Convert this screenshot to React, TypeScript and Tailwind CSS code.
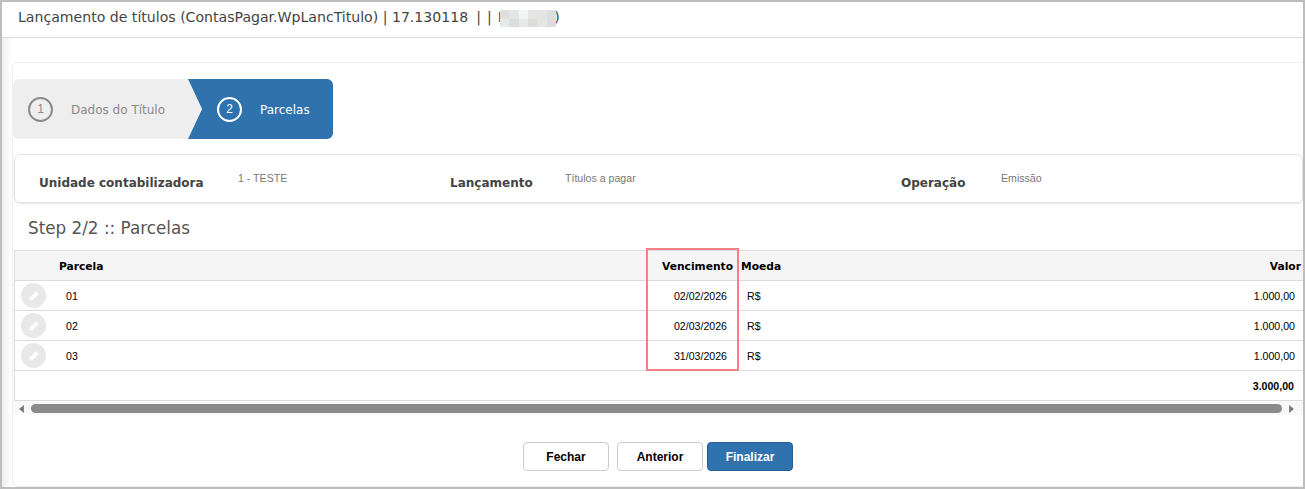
const rows = [
  { parcela: "01", vencimento: "02/02/2026" },
  { parcela: "02", vencimento: "02/03/2026" },
  { parcela: "03", vencimento: "31/03/2026" },
];

const blur = [
  "bg-[#dedede]", "bg-[#e3e5e6]", "bg-[#f3f5f4]", "bg-[#e6e5e4]", "bg-[#e3e5e5]", "bg-[#dcdfdf]",
  "bg-[#e4e9ec]", "bg-[#dcdedd]", "bg-[#e7e9e8]", "bg-[#dedcd9]", "bg-[#e3e5e7]", "bg-[#dcdcdc]",
];

const gridCols = "grid grid-cols-[37px_594px_92px_1fr_80px]";

function EditIcon() {
  return (
    <span className="flex h-[25px] w-[25px] items-center justify-center rounded-full bg-[#e8e8e8]">
      <svg viewBox="0 0 12 12" className="h-[12px] w-[12px]" fill="#ffffff">
        <path d="M8 1.4 10.6 4 4.4 10.2 1.4 10.6 1.8 7.6Z" />
      </svg>
    </span>
  );
}

function Row({ parcela, vencimento }: { parcela: string; vencimento: string }) {
  return (
    <div className={`${gridCols} h-[30px] items-center border-b border-[#dddddd] text-[10.6px] text-black`}>
      <div className="pl-[6px]">
        <EditIcon />
      </div>
      <div className="pl-[14px] pt-[2px]">{parcela}</div>
      <div className="pr-[11px] pt-[2px] text-right">{vencimento}</div>
      <div className="pl-[9px] pt-[2px]">R$</div>
      <div className="pr-[8px] pt-[2px] text-right">1.000,00</div>
    </div>
  );
}

function InfoItem({ label, value, labelWidth, width }: { label: string; value: string; labelWidth: string; width: string }) {
  return (
    <div className={`flex ${width}`}>
      <div className={`${labelWidth} pt-[19px] font-['DejaVu_Sans'] text-[12px] font-bold text-[#444444]`}>{label}</div>
      <div className="pt-[16px] text-[10.6px] text-[#777777]">{value}</div>
    </div>
  );
}

export default function App() {
  return (
    <div className="relative flex h-[489px] w-[1305px] flex-col overflow-hidden border-x-2 border-y-2 border-[#bdbdbd] bg-white font-['Liberation_Sans',sans-serif]">
      <header className="relative flex h-[36px] shrink-0 items-center whitespace-pre border-b border-[#d9d9d9] bg-white pb-[3px] pl-[16px] font-['DejaVu_Sans',sans-serif] text-[14.1px] text-[#444444]">
        <span>Lançamento de títulos (ContasPagar.WpLancTitulo) | 17.130118</span>
        <span className="ml-[8px]">|</span>
        <span className="ml-[6px]">|</span>
        <span className="ml-[6px]">P</span>
        <span className="ml-[48px]">)</span>
        <div className="absolute left-[498px] top-[8px] grid h-[17px] w-[56px] grid-cols-6 grid-rows-2">
          {blur.map((c, i) => (
            <div key={i} className={c} />
          ))}
        </div>
      </header>

      <div className="flex flex-1 flex-col bg-[linear-gradient(90deg,#eeeeee,#ffffff_10px)] pl-[10px] pt-[24px]">
        <main className="flex-1 rounded-l-md border-y border-l border-[#eeeeee] bg-white pt-[16px]">
          <div className="flex h-[60px] w-[320px] overflow-hidden rounded-md">
            <div className="flex w-[189px] shrink-0 items-center bg-[#eeeeee] pl-[15px] [clip-path:polygon(0_0,175px_0,188px_50%,175px_100%,0_100%)]">
              <span className="flex h-[25px] w-[25px] items-center justify-center rounded-full border-2 border-[#8a8a8a] text-[12px] text-[#8a8a8a]">1</span>
              <span className="ml-[18px] pt-[2px] font-['DejaVu_Sans',sans-serif] text-[12px] text-[#8a8a8a]">Dados do Título</span>
            </div>
            <div className="ml-[-14px] flex w-[145px] shrink-0 items-center bg-[#2f72ae] pl-[29px] [clip-path:polygon(0_0,100%_0,100%_100%,0_100%,14px_50%)]">
              <span className="flex h-[25px] w-[25px] items-center justify-center rounded-full border-2 border-white text-[12px] text-white">2</span>
              <span className="ml-[18px] pt-[2px] font-['DejaVu_Sans',sans-serif] text-[12px] text-white">Parcelas</span>
            </div>
          </div>

          <section className="ml-[1px] mt-[15px] flex h-[49px] rounded-md border border-[#e4e4e4] pl-[24px] shadow-[0_1px_2px_rgba(0,0,0,0.12)]">
            <InfoItem label="Unidade contabilizadora" value="1 - TESTE" labelWidth="w-[199px]" width="w-[411px]" />
            <InfoItem label="Lançamento" value="Títulos a pagar" labelWidth="w-[115px]" width="w-[451px]" />
            <InfoItem label="Operação" value="Emissão" labelWidth="w-[100px]" width="w-[300px]" />
          </section>

          <h2 className="mt-[14px] pl-[15px] font-['DejaVu_Sans',sans-serif] text-[16.8px] font-normal leading-[22px] text-[#555555]">Step 2/2 :: Parcelas</h2>

          <div className="ml-[1px] mt-[11px] border-l border-[#dddddd]">
            <div className={`${gridCols} h-[31px] items-center border-y border-[#dddddd] bg-[#f5f5f5] pt-[3px] font-['DejaVu_Sans',sans-serif] text-[10.7px] font-bold text-black`}>
              <div />
              <div className="pl-[7px]">Parcela</div>
              <div className="pr-[5px] text-right">Vencimento</div>
              <div className="pl-[3px]">Moeda</div>
              <div className="pr-[2px] text-right">Valor</div>
            </div>
            {rows.map((r) => (
              <Row key={r.parcela} {...r} />
            ))}
            <div className="flex h-[30px] items-center justify-end border-b border-[#dddddd] pr-[9px] pt-[2px] text-[10.6px] font-bold text-black">3.000,00</div>
          </div>

          <div className="ml-[1px] flex h-[14px] items-center bg-[#f8f8f8] pt-[1px]">
            <svg viewBox="0 0 6 10" className="ml-[5px] h-[8px] w-[5px]" fill="#777777"><path d="M6 0V10L0 5Z" /></svg>
            <div className="ml-[7px] h-[9px] w-[1251px] rounded-full bg-[#8a8a8a]" />
            <svg viewBox="0 0 6 10" className="ml-[7px] h-[8px] w-[5px]" fill="#777777"><path d="M0 0V10L6 5Z" /></svg>
          </div>

          <div className="mt-[27px] flex pl-[510px] text-[12px] font-bold">
            <button className="h-[29px] w-[86px] rounded-[4px] border border-[#cccccc] bg-white text-black">Fechar</button>
            <button className="ml-[8px] h-[29px] w-[86px] rounded-[4px] border border-[#cccccc] bg-white text-black">Anterior</button>
            <button className="ml-[4px] h-[29px] w-[86px] rounded-[4px] border border-[#265f92] bg-[#2f72ae] text-white">Finalizar</button>
          </div>
        </main>
      </div>

      <div className="absolute left-[644px] top-[246px] h-[123px] w-[93px] border-2 border-[#f77f87]" />
    </div>
  );
}
